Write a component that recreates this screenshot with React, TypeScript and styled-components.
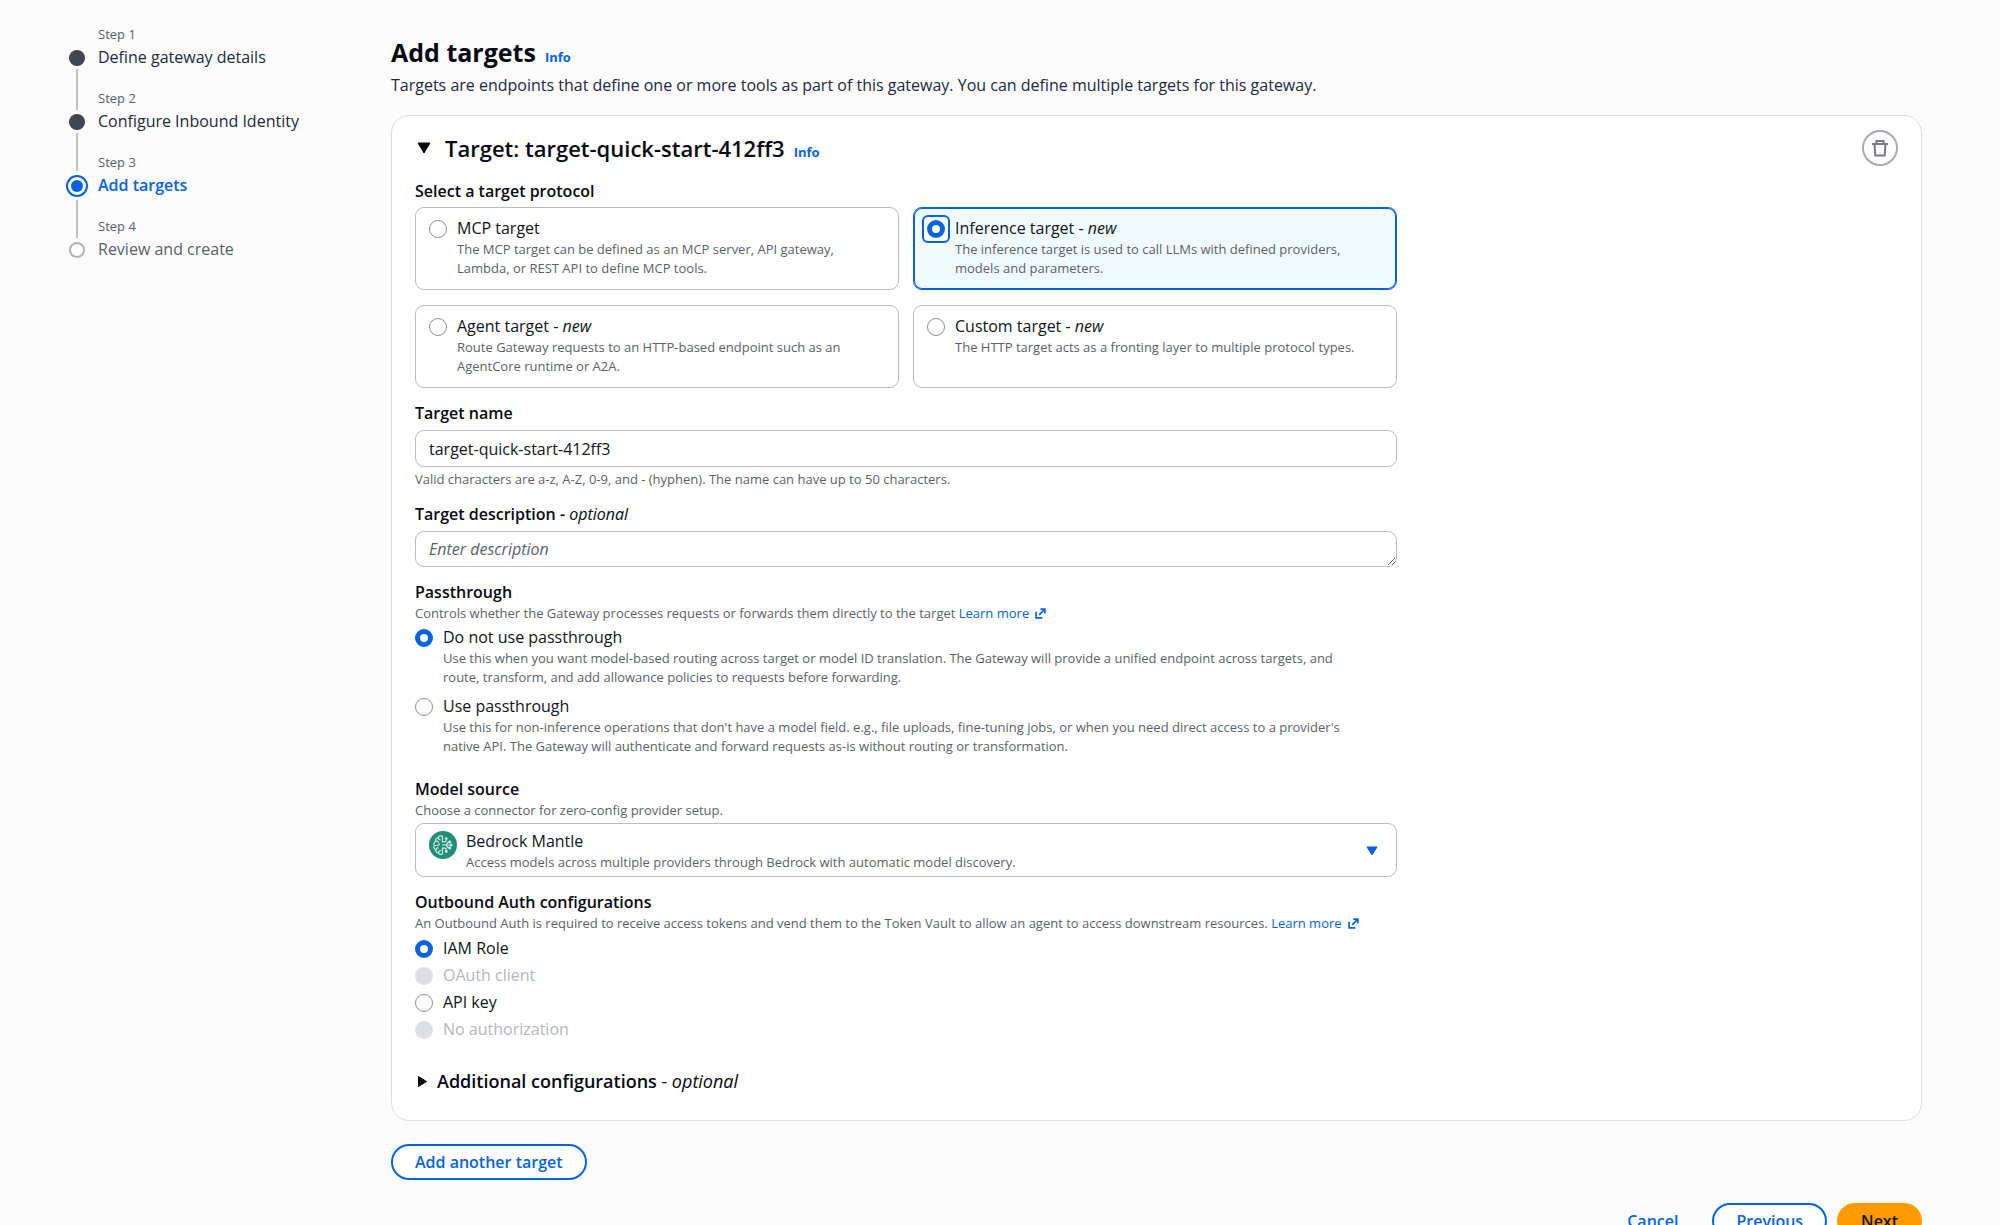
import React, { useState } from "react";
import styled, { createGlobalStyle, css } from "styled-components";

const color = {
  page: "#fcfcfd",
  surface: "#ffffff",
  heading: "#06090f",
  text: "#0f141a",
  secondary: "#5b5f69",
  muted: "#b4b6bd",
  border: "#b9bbc1",
  panelBorder: "#dcdde1",
  control: "#8c8f98",
  dot: "#424650",
  blue: "#0563e3",
  tint: "#f1fbff",
  disabled: "#dddfe4",
  orange: "#ff9900",
};

const GlobalStyle = createGlobalStyle`
  *, *::before, *::after { box-sizing: border-box; }
  body {
    margin: 0;
    background: ${color.page};
    color: ${color.text};
    font: 400 16px/23px "Open Sans", "Noto Sans", sans-serif;
  }
  button, input, textarea, select { font: inherit; color: inherit; }
  h1, h2, h3, p, ol { margin: 0; padding: 0; }
`;

const Layout = styled.div`
  display: flex;
  align-items: flex-start;
  padding: 25px 78px 0 65px;
`;

/* ---------- Step navigation ---------- */

const Sidebar = styled.nav`
  flex: 0 0 326px;
`;

const StepList = styled.ol`
  list-style: none;
`;

type StepState = "done" | "current" | "upcoming";

const StepItem = styled.li`
  display: flex;
  gap: 9px;
  min-height: 64px;
`;

const Rail = styled.div`
  display: flex;
  flex-direction: column;
  align-items: center;
  width: 24px;
`;

const Connector = styled.span<{ $grow?: boolean; $hidden?: boolean; $short?: boolean }>`
  width: 2px;
  flex: ${(p) => (p.$grow ? "1 1 auto" : p.$short ? "0 0 18px" : "0 0 21px")};
  background: ${(p) => (p.$hidden ? "transparent" : "#bfc0c6")};
`;

const MarkerSlot = styled.span<{ $current: boolean }>`
  display: flex;
  align-items: center;
  justify-content: center;
  flex: 0 0 ${(p) => (p.$current ? 29 : 23)}px;
`;

const Marker = styled.span<{ $state: StepState }>`
  width: 16px;
  height: 16px;
  border-radius: 50%;
  ${(p) => p.$state === "done" && css`background: ${color.dot};`}
  ${(p) => p.$state === "upcoming" && css`border: 2px solid #b1b3b9; background: ${color.surface};`}
  ${(p) =>
    p.$state === "current" &&
    css`
      width: 22px;
      height: 22px;
      border: 2px solid ${color.blue};
      background: ${color.blue};
      background-clip: content-box;
      padding: 3px;
    `}
`;

const StepText = styled.div`
  display: flex;
  flex-direction: column;
  gap: 3px;
`;

const StepLabel = styled.span`
  font-size: 13px;
  line-height: 18px;
  color: ${color.secondary};
`;

const StepTitle = styled.span<{ $state: StepState }>`
  color: ${(p) =>
    p.$state === "current" ? color.blue : p.$state === "upcoming" ? color.secondary : "#232938"};
  font-weight: ${(p) => (p.$state === "current" ? 600 : 400)};
`;

/* ---------- Page ---------- */

const Main = styled.main`
  flex: 1;
  min-width: 0;
  padding-top: 11px;
`;

const PageTitle = styled.h1`
  font-size: 25px;
  font-weight: 700;
  line-height: 32px;
  color: ${color.heading};
`;

const InfoLink = styled.a`
  margin-left: 9px;
  font-size: 13px;
  font-weight: 700;
  line-height: 19px;
  color: ${color.blue};
  text-decoration: none;
`;

const PageIntro = styled.p`
  margin-top: 6px;
  color: #232938;
`;

const Panel = styled.section`
  margin-top: 18px;
  padding: 14px 23px 27px;
  border: 1px solid ${color.panelBorder};
  border-radius: 18px;
  background: ${color.surface};
`;

const PanelHeader = styled.header`
  display: flex;
  align-items: center;
  justify-content: space-between;
`;

const TitleGroup = styled.div`
  display: flex;
  align-items: baseline;
`;

const PanelTitle = styled.h2`
  font-size: 22px;
  font-weight: 650;
  line-height: 28px;
  color: ${color.heading};
`;

const Toggle = styled.button`
  display: inline-flex;
  align-items: baseline;
  padding: 0;
  border: 0;
  background: none;
  color: ${color.heading};
  cursor: pointer;
`;

const CaretBox = styled.span<{ $size: "wide" | "narrow" }>`
  display: inline-flex;
  flex: none;
  align-self: center;
  padding-left: 2px;
  width: ${(p) => (p.$size === "wide" ? 30 : 22)}px;
`;

const IconButton = styled.button`
  display: flex;
  align-items: center;
  justify-content: center;
  width: 36px;
  height: 36px;
  padding: 0;
  border: 2px solid #a7a9b1;
  border-radius: 50%;
  background: ${color.surface};
  color: #777a84;
  cursor: pointer;
`;

/* ---------- Form ---------- */

const Form = styled.div`
  display: flex;
  flex-direction: column;
  gap: 14px;
  max-width: 982px;
  margin-top: 14px;
`;

const Field = styled.div`
  display: flex;
  flex-direction: column;
`;

const fieldLabel = css`
  font-weight: 600;
  line-height: 23px;
  color: ${color.heading};
`;

const FieldLabel = styled.label`${fieldLabel}`;
const GroupLabel = styled.span`${fieldLabel}`;

const Optional = styled.em`
  font-weight: 400;
`;

const Hint = styled.p`
  font-size: 13px;
  line-height: 19px;
  color: ${color.secondary};
`;

const HelperText = styled(Hint)`
  margin-top: 3px;
`;

const ExternalLink = styled.a`
  display: inline-flex;
  align-items: center;
  gap: 6px;
  color: ${color.blue};
  font-weight: 400;
  text-decoration: none;
`;

const controlBox = css`
  width: 100%;
  border: 1px solid ${color.border};
  border-radius: 9px;
  background: ${color.surface};
`;

const TextInput = styled.input`
  ${controlBox}
  height: 37px;
  margin-top: 5px;
  padding: 0 13px;
`;

const TextArea = styled.textarea`
  ${controlBox}
  display: block;
  height: 36px;
  margin-top: 5px;
  padding: 6px 13px;
  overflow: hidden;
  resize: vertical;
  &::placeholder {
    color: ${color.secondary};
    font-style: italic;
    opacity: 1;
  }
`;

const Tiles = styled.div`
  display: grid;
  grid-template-columns: repeat(2, minmax(0, 1fr));
  gap: 15px 14px;
  margin-top: 4px;
`;

const Tile = styled.label<{ $selected: boolean }>`
  display: flex;
  gap: 10px;
  padding: 9px 13px 11px;
  border: 1px solid ${(p) => (p.$selected ? color.blue : color.border)};
  box-shadow: ${(p) => (p.$selected ? `inset 0 0 0 1px ${color.blue}` : "none")};
  border-radius: 9px;
  background: ${(p) => (p.$selected ? color.tint : color.surface)};
`;

const RadioRow = styled.label<{ $disabled?: boolean }>`
  display: flex;
  gap: 10px;
  color: ${(p) => (p.$disabled ? color.muted : color.text)};
`;

const RadioBox = styled.span<{ $focused?: boolean }>`
  position: relative;
  flex: none;
  width: 18px;
  height: 18px;
  margin-top: 3px;
  ${(p) =>
    p.$focused &&
    css`
      &::before {
        content: "";
        position: absolute;
        inset: -5px;
        border: 2px solid ${color.blue};
        border-radius: 6px;
        background: ${color.surface};
      }
    `}
`;

const RadioInput = styled.input`
  appearance: none;
  position: relative;
  display: block;
  width: 18px;
  height: 18px;
  margin: 0;
  border: 1px solid ${color.control};
  border-radius: 50%;
  background: ${color.surface};
  outline: none;
  &:checked {
    border: 5px solid ${color.blue};
  }
  &:disabled {
    border-color: ${color.disabled};
    background: ${color.disabled};
  }
`;

const RadioText = styled.span`
  display: flex;
  flex-direction: column;
`;

const RadioHint = styled.span`
  font-size: 13px;
  line-height: 19px;
  color: ${color.secondary};
`;

const RadioList = styled.div<{ $roomy?: boolean }>`
  display: flex;
  flex-direction: column;
  gap: ${(p) => (p.$roomy ? 8 : 4)}px;
  padding: ${(p) => (p.$roomy ? "3px 30px 8px 0" : "4px 0")};
`;

const SelectBox = styled.div`
  ${controlBox}
  display: flex;
  align-items: flex-start;
  gap: 9px;
  margin-top: 3px;
  padding: 6px 18px 4px 13px;
`;

const SelectLogo = styled.svg`
  flex: none;
  margin-top: 1px;
`;

const SelectText = styled.div`
  flex: 1;
  min-width: 0;
`;

const Select = styled.select`
  appearance: none;
  display: block;
  width: 100%;
  height: 23px;
  padding: 0;
  border: 0;
  background: none;
  outline: none;
`;

const SelectCaret = styled.svg`
  flex: none;
  align-self: center;
`;

const SectionTitle = styled.h3`
  margin-top: 24px;
  font-size: 18px;
  font-weight: 600;
  line-height: 24px;
`;

/* ---------- Actions ---------- */

const Button = styled.button<{ $kind?: "normal" | "primary" | "link" }>`
  height: 36px;
  padding: 0 22px;
  border: 2px solid ${color.blue};
  border-radius: 18px;
  background: ${color.surface};
  color: ${color.blue};
  font-weight: 600;
  line-height: 23px;
  cursor: pointer;
  ${(p) => p.$kind === "primary" && css`border-color: ${color.orange}; background: ${color.orange}; color: ${color.text};`}
  ${(p) => p.$kind === "link" && css`border-color: transparent; background: none;`}
`;

const AddRow = styled.div`
  display: flex;
  margin-top: 23px;
`;

const Footer = styled.footer`
  display: flex;
  justify-content: flex-end;
  gap: 10px;
  margin-top: 23px;
`;

/* ---------- Icons ---------- */

const CaretDown = () => (
  <svg width="14" height="12" viewBox="0 0 14 12" aria-hidden="true">
    <path d="M1 1h12L7 11z" fill="currentColor" stroke="currentColor" strokeLinejoin="round" />
  </svg>
);

const CaretRight = () => (
  <svg width="11" height="13" viewBox="0 0 11 13" aria-hidden="true">
    <path d="M1.5 1.5v10l8-5z" fill="currentColor" stroke="currentColor" strokeLinejoin="round" />
  </svg>
);

const TrashIcon = () => (
  <svg width="16" height="18" viewBox="0 0 16 18" fill="none" stroke="currentColor" strokeWidth="2" aria-hidden="true">
    <path d="M0 5h16M4.500 5V2h7v3M2.500 5l.8 11.500h9.400L13.500 5" />
  </svg>
);

const ExternalIcon = () => (
  <svg width="11" height="11" viewBox="0 0 12 12" fill="none" stroke="currentColor" strokeWidth="1.800" aria-hidden="true">
    <path d="M1.200 4v6.800H8M4.500 7.500l6-6M6 1.200h4.800V6" />
  </svg>
);

const MantleLogo = () => (
  <SelectLogo width="28" height="28" viewBox="0 0 28 28" fill="none" aria-hidden="true">
    <circle cx="14" cy="14" r="14" fill="#1f9077" />
    <g stroke="#d3ebe4" strokeWidth="1.200" strokeLinecap="round" strokeLinejoin="round">
      <path d="M13.500 5.500c-1.600-1.200-4-.5-4.300 1.300-1.900.1-3 1.800-2.300 3.400-2 .8-2.600 2.800-1.500 4.300-1.100 1.600-.3 3.600 1.500 4.200-.4 1.900 1 3.300 2.700 3.200.8 1.700 2.700 2 3.900.8" />
      <path d="M13.500 5.500v5.300M13.500 17.200v5.500M9.200 6.800c0 1.200.7 1.900 1.900 2M6.900 10.200c1.100-.4 2.100 0 2.600 1M5.400 14.500h3.100c1.200 0 1.800-.8 1.800-1.800M6.900 18.700c.2-1.300 1.100-1.900 2.300-1.800M9.600 21.900c-.1-1.500.7-2.400 2.100-2.400" />
      <path d="M13.500 10.800h2.300c1 0 1.500-.6 1.500-1.500V8.400M13.500 14h7.200M13.500 17.200h2.300c1 0 1.500.6 1.500 1.500v.9M17 14l1.900-2.700h1.100M17 14l1.900 2.700h1.100" />
    </g>
    <g fill="#d3ebe4">
      <circle cx="17.300" cy="7.600" r="1.400" />
      <circle cx="20.800" cy="11" r="1.400" />
      <circle cx="22.200" cy="14" r="1.400" />
      <circle cx="20.800" cy="17" r="1.400" />
      <circle cx="17.300" cy="20.400" r="1.400" />
    </g>
  </SelectLogo>
);

/* ---------- Data ---------- */

const steps: { title: string; state: StepState }[] = [
  { title: "Define gateway details", state: "done" },
  { title: "Configure Inbound Identity", state: "done" },
  { title: "Add targets", state: "current" },
  { title: "Review and create", state: "upcoming" },
];

const protocols = [
  { id: "mcp", title: "MCP target", isNew: false, hint: "The MCP target can be defined as an MCP server, API gateway, Lambda, or REST API to define MCP tools." },
  { id: "inference", title: "Inference target", isNew: true, hint: "The inference target is used to call LLMs with defined providers, models and parameters." },
  { id: "agent", title: "Agent target", isNew: true, hint: "Route Gateway requests to an HTTP-based endpoint such as an AgentCore runtime or A2A." },
  { id: "custom", title: "Custom target", isNew: true, hint: "The HTTP target acts as a fronting layer to multiple protocol types." },
];

const passthroughOptions = [
  { id: "off", title: "Do not use passthrough", hint: "Use this when you want model-based routing across target or model ID translation. The Gateway will provide a unified endpoint across targets, and route, transform, and add allowance policies to requests before forwarding." },
  { id: "on", title: "Use passthrough", hint: "Use this for non-inference operations that don't have a model field. e.g., file uploads, fine-tuning jobs, or when you need direct access to a provider's native API. The Gateway will authenticate and forward requests as-is without routing or transformation." },
];

const authOptions = [
  { id: "iam", title: "IAM Role", disabled: false },
  { id: "oauth", title: "OAuth client", disabled: true },
  { id: "key", title: "API key", disabled: false },
  { id: "none", title: "No authorization", disabled: true },
];

function LearnMore() {
  return (
    <ExternalLink href="#learn-more">
      Learn more
      <ExternalIcon />
    </ExternalLink>
  );
}

export default function App() {
  const [protocol, setProtocol] = useState("inference");
  const [passthrough, setPassthrough] = useState("off");
  const [auth, setAuth] = useState("iam");
  const [name, setName] = useState("target-quick-start-412ff3");

  return (
    <>
      <GlobalStyle />
      <Layout>
        <Sidebar aria-label="Steps">
          <StepList>
            {steps.map((step, i) => {
              const current = step.state === "current";
              return (
                <StepItem key={step.title} aria-current={current ? "step" : undefined}>
                  <Rail>
                    <Connector $hidden={i === 0} $short={current} />
                    <MarkerSlot $current={current}>
                      <Marker $state={step.state} />
                    </MarkerSlot>
                    <Connector $grow $hidden={i === steps.length - 1} />
                  </Rail>
                  <StepText>
                    <StepLabel>Step {i + 1}</StepLabel>
                    <StepTitle $state={step.state}>{step.title}</StepTitle>
                  </StepText>
                </StepItem>
              );
            })}
          </StepList>
        </Sidebar>

        <Main>
          <PageTitle>
            Add targets
            <InfoLink href="#info">Info</InfoLink>
          </PageTitle>
          <PageIntro>
            Targets are endpoints that define one or more tools as part of this gateway. You can define multiple targets for this gateway.
          </PageIntro>

          <Panel>
            <PanelHeader>
              <TitleGroup>
                <PanelTitle>
                  <Toggle type="button" aria-expanded="true">
                    <CaretBox $size="wide">
                      <CaretDown />
                    </CaretBox>
                    <span>Target: target-quick-start-412ff3</span>
                  </Toggle>
                </PanelTitle>
                <InfoLink href="#target-info">Info</InfoLink>
              </TitleGroup>
              <IconButton type="button" aria-label="Remove target">
                <TrashIcon />
              </IconButton>
            </PanelHeader>

            <Form>
              <Field role="radiogroup" aria-labelledby="protocol-label">
                <GroupLabel id="protocol-label">Select a target protocol</GroupLabel>
                <Tiles>
                  {protocols.map((p) => (
                    <Tile key={p.id} $selected={protocol === p.id}>
                      <RadioBox $focused={protocol === p.id}>
                        <RadioInput type="radio" name="protocol" checked={protocol === p.id} onChange={() => setProtocol(p.id)} />
                      </RadioBox>
                      <RadioText>
                        <span>
                          {p.title}
                          {p.isNew && <> - <em>new</em></>}
                        </span>
                        <RadioHint>{p.hint}</RadioHint>
                      </RadioText>
                    </Tile>
                  ))}
                </Tiles>
              </Field>

              <Field>
                <FieldLabel htmlFor="target-name">Target name</FieldLabel>
                <TextInput id="target-name" value={name} onChange={(e) => setName(e.target.value)} />
                <HelperText>Valid characters are a-z, A-Z, 0-9, and - (hyphen). The name can have up to 50 characters.</HelperText>
              </Field>

              <Field>
                <FieldLabel htmlFor="target-description">
                  Target description - <Optional>optional</Optional>
                </FieldLabel>
                <TextArea id="target-description" rows={1} placeholder="Enter description" />
              </Field>

              <Field role="radiogroup" aria-labelledby="passthrough-label">
                <GroupLabel id="passthrough-label">Passthrough</GroupLabel>
                <Hint>
                  Controls whether the Gateway processes requests or forwards them directly to the target <LearnMore />
                </Hint>
                <RadioList $roomy>
                  {passthroughOptions.map((o) => (
                    <RadioRow key={o.id}>
                      <RadioBox>
                        <RadioInput type="radio" name="passthrough" checked={passthrough === o.id} onChange={() => setPassthrough(o.id)} />
                      </RadioBox>
                      <RadioText>
                        <span>{o.title}</span>
                        <RadioHint>{o.hint}</RadioHint>
                      </RadioText>
                    </RadioRow>
                  ))}
                </RadioList>
              </Field>

              <Field>
                <FieldLabel htmlFor="model-source">Model source</FieldLabel>
                <Hint>Choose a connector for zero-config provider setup.</Hint>
                <SelectBox>
                  <MantleLogo />
                  <SelectText>
                    <Select id="model-source" defaultValue="mantle">
                      <option value="mantle">Bedrock Mantle</option>
                    </Select>
                    <Hint>Access models across multiple providers through Bedrock with automatic model discovery.</Hint>
                  </SelectText>
                  <SelectCaret width="12" height="10" viewBox="0 0 12 10" aria-hidden="true">
                    <path d="M1 1h10L6 9z" fill={color.blue} stroke={color.blue} strokeLinejoin="round" />
                  </SelectCaret>
                </SelectBox>
              </Field>

              <Field role="radiogroup" aria-labelledby="auth-label">
                <GroupLabel id="auth-label">Outbound Auth configurations</GroupLabel>
                <Hint>
                  An Outbound Auth is required to receive access tokens and vend them to the Token Vault to allow an agent to access downstream resources. <LearnMore />
                </Hint>
                <RadioList>
                  {authOptions.map((o) => (
                    <RadioRow key={o.id} $disabled={o.disabled}>
                      <RadioBox>
                        <RadioInput type="radio" name="auth" disabled={o.disabled} checked={auth === o.id} onChange={() => setAuth(o.id)} />
                      </RadioBox>
                      {o.title}
                    </RadioRow>
                  ))}
                </RadioList>
              </Field>
            </Form>

            <SectionTitle>
              <Toggle type="button" aria-expanded="false">
                <CaretBox $size="narrow">
                  <CaretRight />
                </CaretBox>
                <span>
                  Additional configurations <Optional>- optional</Optional>
                </span>
              </Toggle>
            </SectionTitle>
          </Panel>

          <AddRow>
            <Button type="button">Add another target</Button>
          </AddRow>

          <Footer>
            <Button type="button" $kind="link">Cancel</Button>
            <Button type="button">Previous</Button>
            <Button type="button" $kind="primary">Next</Button>
          </Footer>
        </Main>
      </Layout>
    </>
  );
}
